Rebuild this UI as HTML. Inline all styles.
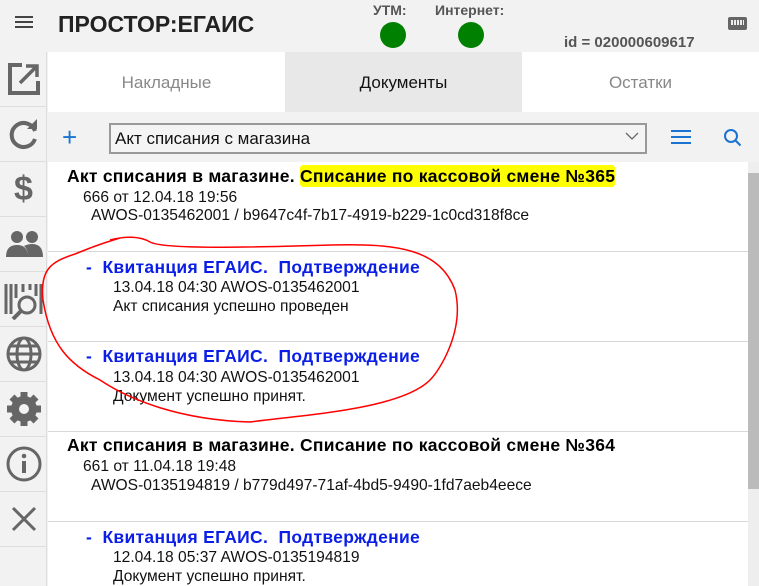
<!DOCTYPE html>
<html><head><meta charset="utf-8"><style>
*{margin:0;padding:0;box-sizing:border-box}
html,body{width:759px;height:586px;overflow:hidden}
body{background:#f2f2f2;font-family:"Liberation Sans","DejaVu Sans",sans-serif;position:relative}
.a{position:absolute}
.side{left:0;top:52px;width:47px;height:534px;background:#f2f2f2;border-right:1px solid #ddd}
.si{position:absolute;left:0;width:47px;height:55px;border-bottom:1px solid #ddd;display:flex;align-items:center;justify-content:center}
.list{left:48px;top:162px;width:700px;height:424px;background:#fff;overflow:hidden}
.row{position:absolute;left:0;width:700px;height:90px;border-bottom:1px solid #d8d8d8}
.t{position:absolute;font-weight:bold;font-size:17.5px;letter-spacing:0.25px;color:#000;white-space:nowrap}
.n{position:absolute;font-size:15.6px;color:#111;white-space:nowrap}
.b{position:absolute;font-weight:bold;font-size:17.5px;letter-spacing:0.3px;color:#0a1ee6;white-space:nowrap}
.hl{background:#ffff00;border-radius:3px;padding:1px 0}
</style></head><body>
<div class="a" style="left:15px;top:16px;width:18px;height:2px;background:#444;box-shadow:0 5px 0 #444,0 10px 0 #444"></div>
<div class="a" style="left:58px;top:11px;font-size:23px;font-weight:bold;color:#222">ПРОСТОР:ЕГАИС</div>
<div class="a" style="left:373px;top:2px;font-size:14px;font-weight:bold;color:#555">УТМ:</div>
<div class="a" style="left:435px;top:2px;font-size:14px;font-weight:bold;color:#555">Интернет:</div>
<div class="a" style="left:380px;top:22px;width:26px;height:26px;border-radius:50%;background:#008000"></div>
<div class="a" style="left:458px;top:22px;width:26px;height:26px;border-radius:50%;background:#008000"></div>
<div class="a" style="left:564px;top:34px;font-size:15px;font-weight:bold;color:#555">id = 020000609617</div>
<div class="a" style="left:728px;top:17px;width:19px;height:13px;background:#666;border-radius:2px"></div>
<div class="a" style="left:731px;top:20px;width:13px;height:5px;background:repeating-linear-gradient(90deg,#eee 0 2px,transparent 2px 3px)"></div>
<div class="a" style="left:48px;top:52px;width:711px;height:60px;background:#fff"></div>
<div class="a" style="left:285px;top:52px;width:237px;height:60px;background:#e8e8e8"></div>
<div class="a" style="left:48px;top:73px;width:237px;text-align:center;font-size:17px;color:#888">Накладные</div>
<div class="a" style="left:285px;top:73px;width:237px;text-align:center;font-size:17px;color:#111">Документы</div>
<div class="a" style="left:522px;top:73px;width:237px;text-align:center;font-size:17px;color:#888">Остатки</div>
<div class="a" style="left:62px;top:124px;font-size:26px;color:#1a73d0;line-height:26px">+</div>
<div class="a" style="left:109px;top:123px;width:538px;height:31px;border:2px solid #999;background:#f4f4f4;font-size:17px;padding:4px 0 0 4px;color:#111">Акт списания с магазина</div>
<svg class="a" style="left:624px;top:131px" width="16" height="10"><path d="M2 2l6 6 6-6" stroke="#666" fill="none" stroke-width="1.3"/></svg>
<div class="a" style="left:671px;top:130px;width:20px;height:1.5px;background:#1a73d0;box-shadow:0 6px 0 #1a73d0,0 12px 0 #1a73d0"></div>
<svg class="a" style="left:722px;top:127px" width="22" height="22"><circle cx="9" cy="9" r="6" stroke="#1a73d0" stroke-width="2" fill="none"/><path d="M13.5 13.5l5 5" stroke="#1a73d0" stroke-width="2"/></svg>
<div class="a side">
<div class="si" style="top:0"><svg width="36" height="36"><path d="M16 4H4v28h28V20" stroke="#666" stroke-width="4" fill="none"/><path d="M14 22L30 6M20 5h11v11" stroke="#666" stroke-width="3.5" fill="none"/></svg></div>
<div class="si" style="top:55px"><svg width="34" height="34"><path d="M28 14A12 12 0 1 0 28 22" stroke="#666" stroke-width="4" fill="none"/><path d="M20 12h10V2z" fill="#666"/></svg></div>
<div class="si" style="top:110px;font-size:34px;color:#666;font-weight:bold">$</div>
<div class="si" style="top:165px"><svg width="40" height="30"><circle cx="13" cy="8" r="6" fill="#666"/><circle cx="28" cy="8" r="6" fill="#666"/><path d="M2 28q0-12 11-12q11 0 11 12zM24 28q0-8-4-11q4-2 8-2q11 0 11 13z" fill="#666"/></svg></div>
<div class="si" style="top:220px"><svg width="42" height="42"><path d="M3 6v30M8 6v30M13 6v14M20 6v8M27 6v6M33 6v12M38 6v30" stroke="#666" stroke-width="3"/><circle cx="24" cy="27" r="8" stroke="#666" stroke-width="3" fill="#f2f2f2"/><path d="M18 33l-8 8" stroke="#666" stroke-width="4"/></svg></div>
<div class="si" style="top:275px"><svg width="38" height="38"><g stroke="#666" stroke-width="3" fill="none"><circle cx="19" cy="19" r="16"/><ellipse cx="19" cy="19" rx="7" ry="16"/><path d="M3 19h32M6 11h26M6 27h26"/></g></svg></div>
<div class="si" style="top:330px"><svg width="38" height="38"><g fill="#666"><circle cx="19" cy="19" r="13"/><g stroke="#666" stroke-width="7"><path d="M19 2v34M2 19h34M7 7l24 24M31 7L7 31"/></g></g><circle cx="19" cy="19" r="5" fill="#f2f2f2"/></svg></div>
<div class="si" style="top:385px"><svg width="38" height="38"><circle cx="19" cy="19" r="16" stroke="#666" stroke-width="3" fill="none"/><path d="M19 16v12" stroke="#666" stroke-width="4"/><circle cx="19" cy="11" r="2.3" fill="#666"/></svg></div>
<div class="si" style="top:440px"><svg width="30" height="30"><path d="M4 4l22 22M26 4L4 26" stroke="#666" stroke-width="3"/></svg></div>
</div>
<div class="a list">
<div class="row" style="top:0">
<div class="t" style="left:19px;top:4px">Акт списания в магазине. <span class="hl">Списание по кассовой смене №365</span></div>
<div class="n" style="left:35px;top:27px">666 от 12.04.18 19:56</div>
<div class="n" style="left:43px;top:45px">AWOS-0135462001 / b9647c4f-7b17-4919-b229-1c0cd318f8ce</div>
</div>
<div class="row" style="top:90px">
<div class="b" style="left:38px;top:5px">-&nbsp; Квитанция ЕГАИС.&nbsp; Подтверждение</div>
<div class="n" style="left:65px;top:27px">13.04.18 04:30 AWOS-0135462001</div>
<div class="n" style="left:65px;top:46px">Акт списания успешно проведен</div>
</div>
<div class="row" style="top:180px">
<div class="b" style="left:38px;top:4px">-&nbsp; Квитанция ЕГАИС.&nbsp; Подтверждение</div>
<div class="n" style="left:65px;top:27px">13.04.18 04:30 AWOS-0135462001</div>
<div class="n" style="left:65px;top:46px">Документ успешно принят.</div>
</div>
<div class="row" style="top:270px">
<div class="t" style="left:19px;top:3px">Акт списания в магазине. Списание по кассовой смене №364</div>
<div class="n" style="left:35px;top:26px">661 от 11.04.18 19:48</div>
<div class="n" style="left:43px;top:45px">AWOS-0135194819 / b779d497-71af-4bd5-9490-1fd7aeb4eece</div>
</div>
<div class="row" style="top:360px;border:none">
<div class="b" style="left:38px;top:5px">-&nbsp; Квитанция ЕГАИС.&nbsp; Подтверждение</div>
<div class="n" style="left:65px;top:27px">12.04.18 05:37 AWOS-0135194819</div>
<div class="n" style="left:65px;top:46px">Документ успешно принят.</div>
</div>
</div>
<div class="a" style="left:748px;top:162px;width:11px;height:424px;background:#eee"></div>
<div class="a" style="left:748px;top:173px;width:11px;height:316px;background:#bbb"></div>
<svg class="a" style="left:0;top:0" width="759" height="586"><path d="M110 240C125 236 140 236 150 242C165 250 260 247 330 245C400 243 440 250 455 290C465 330 440 370 430 380C400 410 300 415 250 422C180 420 130 400 100 380C70 365 50 345 43 300C40 270 50 262 75 254C90 248 100 244 120 238" stroke="#f00" stroke-width="1.5" fill="none"/></svg>
</body></html>
